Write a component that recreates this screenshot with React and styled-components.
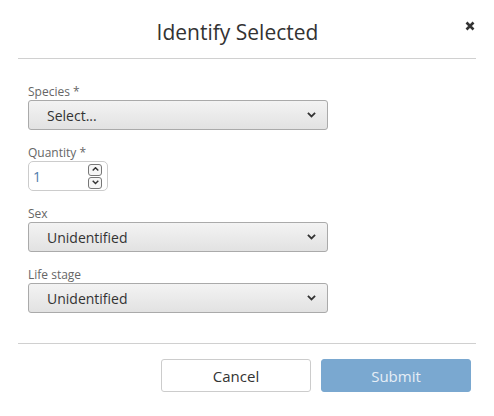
import React, { useState } from 'react';
import styled, { createGlobalStyle } from 'styled-components';

const GlobalStyle = createGlobalStyle`
  body {
    margin: 0;
    background: #fff;
    font-family: 'Open Sans', 'Liberation Sans', sans-serif;
  }
`;

const Chevron = ({ up, size = 9 }) => (
  <svg width={size} height={size * 0.6} viewBox="0 0 10 6">
    <path
      d={up ? 'M1 5 L5 1 L9 5' : 'M1 1 L5 5 L9 1'}
      fill="none"
      stroke="#333"
      strokeWidth="2"
    />
  </svg>
);

const SelectField = ({ label, value }) => (
  <Field>
    <Label>{label}</Label>
    <SelectBox>
      <span>{value}</span>
      <Chevron />
    </SelectBox>
  </Field>
);

export default function App() {
  const [qty, setQty] = useState(1);

  return (
    <>
      <GlobalStyle />
      <Modal>
        <Header>
          <Title>Identify Selected</Title>
          <CloseBtn>
            <svg width="10" height="10" viewBox="0 0 10 10">
              <path d="M1.5 1.5 L8.5 8.5 M8.5 1.5 L1.5 8.5" stroke="#333" strokeWidth="2.6" />
            </svg>
          </CloseBtn>
        </Header>

        <Body>
          <SelectField label="Species *" value="Select..." />

          <Field>
            <Label>Quantity *</Label>
            <NumberBox>
              <span>{qty}</span>
              <Spinner>
                <SpinBtn onClick={() => setQty(qty + 1)}>
                  <Chevron up size={7} />
                </SpinBtn>
                <SpinBtn onClick={() => setQty(Math.max(1, qty - 1))}>
                  <Chevron size={7} />
                </SpinBtn>
              </Spinner>
            </NumberBox>
          </Field>

          <SelectField label="Sex" value="Unidentified" />
          <SelectField label="Life stage" value="Unidentified" />
        </Body>

        <Footer>
          <Button>Cancel</Button>
          <Button primary>Submit</Button>
        </Footer>
      </Modal>
    </>
  );
}

const Modal = styled.div`
  width: 458px;
  margin: 0 18px;
`;

const Header = styled.div`
  display: flex;
  align-items: flex-start;
  height: 58px;
  border-bottom: 1px solid #d0d0d0;
`;

const Title = styled.h2`
  flex: 1;
  margin: 17px 0 0;
  text-align: center;
  font-size: 21px;
  line-height: 30px;
  font-weight: 400;
  color: #333;
`;

const CloseBtn = styled.div`
  width: 18px;
  padding-top: 21px;
  display: flex;
  justify-content: flex-end;
  padding-right: 1px;
`;

const Body = styled.div`
  display: flex;
  flex-direction: column;
  gap: 15px;
  padding: 25px 10px 30px;
  border-bottom: 1px solid #d0d0d0;
`;

const Field = styled.div`
  display: flex;
  flex-direction: column;
`;

const Label = styled.label`
  font-size: 12px;
  line-height: 16px;
  color: #666;
`;

const SelectBox = styled.div`
  box-sizing: border-box;
  width: 300px;
  height: 30px;
  display: flex;
  align-items: center;
  justify-content: space-between;
  padding: 0 11px 0 18px;
  border: 1px solid #aaa;
  border-radius: 3px;
  background: linear-gradient(#f3f3f3, #e2e2e2);
  font-size: 14px;
  color: #333;
`;

const NumberBox = styled.div`
  box-sizing: border-box;
  width: 80px;
  height: 30px;
  display: flex;
  align-items: center;
  justify-content: space-between;
  padding: 0 5px 0 4px;
  border: 1px solid #ccc;
  border-radius: 5px;
  font-size: 14px;
  color: #4d7bab;
`;

const Spinner = styled.div`
  display: flex;
  flex-direction: column;
  gap: 1px;
`;

const SpinBtn = styled.div`
  box-sizing: border-box;
  width: 14px;
  height: 12px;
  display: flex;
  align-items: center;
  justify-content: center;
  border: 1px solid #777;
  border-radius: 3px;
  background: #f6f6f6;
  cursor: pointer;
`;

const Footer = styled.div`
  display: flex;
  justify-content: flex-end;
  gap: 10px;
  padding: 15px 5px 0 0;
`;

const Button = styled.button`
  width: 150px;
  height: 33px;
  border-radius: 3px;
  font-family: inherit;
  font-size: 15px;
  border: 1px solid ${(p) => (p.primary ? '#7aa8d0' : '#ccc')};
  background: ${(p) => (p.primary ? '#7aa8d0' : '#fff')};
  color: ${(p) => (p.primary ? '#e6eef6' : '#333')};
  cursor: pointer;
`;
